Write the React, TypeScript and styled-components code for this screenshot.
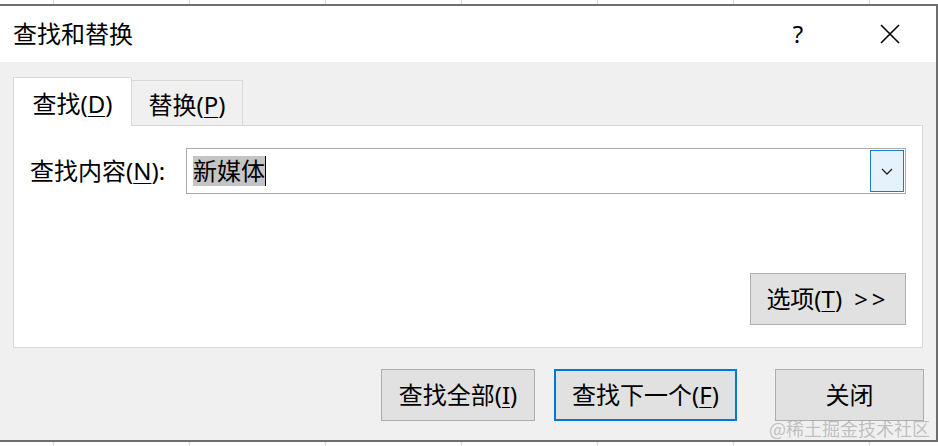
import React from "react";
import styled, { createGlobalStyle } from "styled-components";

const GlobalStyle = createGlobalStyle`
  html, body {
    margin: 0;
    padding: 0;
    background: #fff;
  }
  body {
    font-family: "Noto Sans", "Noto Sans CJK SC", sans-serif;
    color: #000;
  }
`;

const Screen = styled.div`
  position: relative;
  width: 938px;
  height: 446px;
  display: flex;
  flex-direction: column;
  overflow: hidden;
`;

const SheetStrip = styled.div`
  flex: none;
  height: 4px;
  background-color: #fff;
  background-image: linear-gradient(to right, #d4d4d4 1px, transparent 1px);
  background-size: 136px 100%;
  background-position: 53px 0;
`;

const Dialog = styled.div`
  flex: 1;
  display: flex;
  flex-direction: column;
  border-top: 2px solid #6e6e6e;
  border-right: 2px solid #6e6e6e;
  border-bottom: 2px solid #6e6e6e;
  min-height: 0;
`;

const TitleBar = styled.div`
  flex: none;
  height: 56px;
  display: flex;
  align-items: center;
  padding-left: 13px;
  background: #fff;
`;

const Title = styled.div`
  flex: 1;
  font-size: 24px;
  line-height: 1;
`;

const Captions = styled.div`
  display: flex;
  align-items: center;
  gap: 46px;
  padding-right: 23px;
`;

const CaptionButton = styled.div`
  width: 46px;
  height: 46px;
  display: flex;
  align-items: center;
  justify-content: center;
  font-size: 24px;
  line-height: 1;
`;

const Body = styled.div`
  flex: 1;
  display: flex;
  flex-direction: column;
  background: #f0f0f0;
  padding: 16px 13px 0 13px;
`;

const TabRow = styled.div`
  display: flex;
  align-items: flex-end;
  height: 48px;
  position: relative;
  z-index: 1;
  margin-bottom: -1px;
`;

const Tab = styled.div<{ $active?: boolean; $width: number }>`
  width: ${({ $width }) => $width}px;
  height: ${({ $active }) => ($active ? 49 : 46)}px;
  box-sizing: border-box;
  display: flex;
  align-items: center;
  justify-content: center;
  padding-top: 4px;
  font-size: 24px;
  line-height: 1;
  background: ${({ $active }) => ($active ? "#fff" : "#f0f0f0")};
  border: 1px solid #d9d9d9;
  border-bottom: ${({ $active }) => ($active ? "none" : "1px solid #d9d9d9")};
  border-left: ${({ $active }) => ($active ? "1px solid #d9d9d9" : "none")};
`;

const Key = styled.span`
  text-decoration: underline;
  text-underline-offset: 3px;
  text-decoration-thickness: 1px;
`;

const Panel = styled.div`
  height: 223px;
  box-sizing: border-box;
  display: flex;
  flex-direction: column;
  background: #fff;
  border: 1px solid #d9d9d9;
  padding: 22px 16px;
`;

const FieldRow = styled.div`
  display: flex;
  align-items: center;
`;

const FieldLabel = styled.div`
  width: 156px;
  flex: none;
  font-size: 24px;
  line-height: 1;
`;

const Combo = styled.div`
  flex: 1;
  height: 46px;
  box-sizing: border-box;
  display: flex;
  align-items: center;
  border: 1px solid #ababab;
  background: #fff;
  padding-left: 6px;
`;

const Selected = styled.span`
  display: flex;
  align-items: center;
  height: 30px;
  background: #c4c4c4;
  font-size: 24px;
  line-height: 1;
`;

const Caret = styled.span`
  width: 1px;
  height: 30px;
  background: #000;
`;

const ComboSpacer = styled.div`
  flex: 1;
`;

const DropButton = styled.div`
  width: 34px;
  height: 42px;
  box-sizing: border-box;
  margin-right: 1px;
  display: flex;
  align-items: center;
  justify-content: center;
  background: #e5f1fb;
  border: 1px solid #1f7ac4;
`;

const OptionsRow = styled.div`
  margin-top: auto;
  display: flex;
  justify-content: flex-end;
`;

const Button = styled.div<{ $width: number; $primary?: boolean; $gap?: number }>`
  width: ${({ $width }) => $width}px;
  height: 52px;
  box-sizing: border-box;
  margin-left: ${({ $gap }) => $gap ?? 0}px;
  display: flex;
  align-items: center;
  justify-content: center;
  background: #e1e1e1;
  border: ${({ $primary }) => ($primary ? "2px solid #0078d7" : "1px solid #adadad")};
  font-size: 24px;
  line-height: 1;
`;

const Footer = styled.div`
  display: flex;
  justify-content: flex-end;
  padding-top: 21px;
  margin-right: -1px;
`;

const Arrows = styled.span`
  margin-left: 12px;
  letter-spacing: 4px;
`;

const Watermark = styled.div`
  position: absolute;
  right: 8px;
  bottom: 9px;
  font-family: "Noto Sans CJK SC", sans-serif;
  font-size: 18px;
  line-height: 1;
  color: rgba(150, 150, 150, 0.55);
`;

export default function App() {
  return (
    <>
      <GlobalStyle />
      <Screen>
        <SheetStrip />
        <Dialog>
          <TitleBar>
            <Title>查找和替换</Title>
            <Captions>
              <CaptionButton>?</CaptionButton>
              <CaptionButton>
                <svg width="20" height="20" viewBox="0 0 20 20">
                  <path d="M1 1 L19 19 M19 1 L1 19" stroke="#000" strokeWidth="1.6" fill="none" />
                </svg>
              </CaptionButton>
            </Captions>
          </TitleBar>
          <Body>
            <TabRow>
              <Tab $active $width={119}>
                查找(<Key>D</Key>)
              </Tab>
              <Tab $width={111}>
                替换(<Key>P</Key>)
              </Tab>
            </TabRow>
            <Panel>
              <FieldRow>
                <FieldLabel>
                  查找内容(<Key>N</Key>):
                </FieldLabel>
                <Combo>
                  <Selected>新媒体</Selected>
                  <Caret />
                  <ComboSpacer />
                  <DropButton>
                    <svg width="12" height="7" viewBox="0 0 12 7">
                      <path d="M1 1 L6 6 L11 1" stroke="#222" strokeWidth="1.3" fill="none" />
                    </svg>
                  </DropButton>
                </Combo>
              </FieldRow>
              <OptionsRow>
                <Button $width={156}>
                  选项(<Key>T</Key>)<Arrows>&gt;&gt;</Arrows>
                </Button>
              </OptionsRow>
            </Panel>
            <Footer>
              <Button $width={154}>
                查找全部(<Key>I</Key>)
              </Button>
              <Button $width={183} $primary $gap={19}>
                查找下一个(<Key>F</Key>)
              </Button>
              <Button $width={149} $gap={38}>
                关闭
              </Button>
            </Footer>
          </Body>
        </Dialog>
        <SheetStrip />
        <Watermark>@稀土掘金技术社区</Watermark>
      </Screen>
    </>
  );
}
